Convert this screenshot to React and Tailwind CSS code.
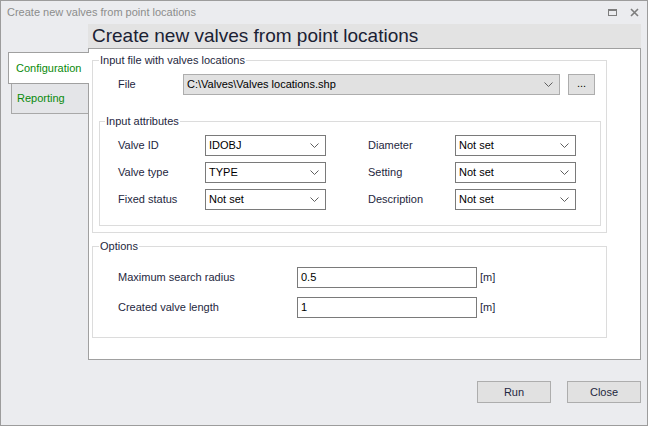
import React from "react";

function Chevron() {
  return (
    <svg width="9" height="5" viewBox="0 0 9 5" className="shrink-0">
      <path d="M0.5 0.5 L4.5 4.5 L8.5 0.5" stroke="#5f5f5f" strokeWidth="1" fill="none" />
    </svg>
  );
}

function Combo({ value, gray, w }) {
  return (
    <div
      className={
        "h-[21px] flex items-center justify-between pl-[3px] pr-[6px] border text-black " +
        (gray ? "bg-[#e1e1e1] border-[#adadad] " : "bg-white border-[#7a7a7a] ") +
        w
      }
    >
      <span>{value}</span>
      <Chevron />
    </div>
  );
}

function AttrRow({ l1, v1, l2, v2 }) {
  return (
    <div className="flex items-center h-[21px] ml-[18px]">
      <span className="w-[87px]">{l1}</span>
      <Combo value={v1} w="w-[121px]" />
      <span className="w-[87px] ml-[42px]">{l2}</span>
      <Combo value={v2} w="w-[121px]" />
    </div>
  );
}

function OptRow({ label, value }) {
  return (
    <div className="flex items-center h-[21px] ml-[25px]">
      <span className="w-[179px]">{label}</span>
      <div className="w-[180px] h-[21px] border border-[#7a7a7a] bg-white flex items-center pl-[3px] text-black">
        {value}
      </div>
      <span className="ml-[3px]">[m]</span>
    </div>
  );
}

export default function App() {
  return (
    <div className="w-[648px] h-[426px] bg-[#ebecef] border border-[#9c9c9c] flex flex-col font-['Liberation_Sans',sans-serif] text-[11px] text-[#1e2740] overflow-hidden">
      {/* title bar */}
      <div className="h-[22px] shrink-0 flex items-center pl-[6px] pr-[8px]">
        <span className="flex-1 text-[11px] text-[#8c8c8c]">Create new valves from point locations</span>
        <div className="w-[9px] h-[7px] border border-t-2 border-[#7d7d7d] mr-[13px]" />
        <svg width="9" height="9" viewBox="0 0 9 9">
          <path d="M1 1 L8 8 M8 1 L1 8" stroke="#7d7d7d" strokeWidth="1.6" />
        </svg>
      </div>

      <div className="flex flex-1">
        {/* tabs */}
        <div className="w-[80px] ml-[7px] pt-[29px] flex flex-col shrink-0">
          <div className="h-[32px] -mr-[1px] relative z-10 bg-white border border-r-0 border-[#a0a0a0] flex items-center pl-[7px] text-[#0a8a0a]">
            Configuration
          </div>
          <div className="h-[30px] ml-[3px] bg-[#e4e5e8] border border-t-0 border-r-0 border-[#a8a8a8] flex items-center pl-[5px] text-[#0a8a0a]">
            Reporting
          </div>
        </div>

        {/* main */}
        <div className="w-[553px] flex flex-col pt-[1px] shrink-0">
          <div className="h-[24px] bg-[#e3e3e3] pl-[4px] flex items-center text-[19px] text-[#1a2133]">
            Create new valves from point locations
          </div>
          <div className="h-[312px] bg-white border border-[#a0a0a0] pl-[3px] pt-[4px] flex flex-col">
            <fieldset className="w-[515px] h-[180px] border border-[#dcdcdc] flex flex-col">
              <legend className="ml-[6px] px-[1px] leading-[14px]">Input file with valves locations</legend>
              <div className="flex items-center mt-[7px] ml-[25px]">
                <span className="w-[65px]">File</span>
                <Combo value="C:\Valves\Valves locations.shp" gray w="w-[377px]" />
                <div className="ml-[8px] w-[27px] h-[21px] -mt-[1px] bg-[#e1e1e1] border border-[#adadad] flex items-center justify-center text-black pb-[2px]">
                  ...
                </div>
              </div>
              <fieldset className="ml-[6px] mt-[19px] w-[502px] h-[112px] border border-[#dcdcdc] flex flex-col gap-[6px] pt-[7px]">
                <legend className="ml-[5px] px-[1px] leading-[14px]">Input attributes</legend>
                <AttrRow l1="Valve ID" v1="IDOBJ" l2="Diameter" v2="Not set" />
                <AttrRow l1="Valve type" v1="TYPE" l2="Setting" v2="Not set" />
                <AttrRow l1="Fixed status" v1="Not set" l2="Description" v2="Not set" />
              </fieldset>
            </fieldset>
            <fieldset className="w-[515px] h-[99px] mt-[6px] border border-[#dcdcdc] flex flex-col gap-[9px] pt-[14px]">
              <legend className="ml-[6px] px-[1px] leading-[14px]">Options</legend>
              <OptRow label="Maximum search radius" value="0.5" />
              <OptRow label="Created valve length" value="1" />
            </fieldset>
          </div>
          <div className="flex justify-end mt-[21px]">
            <button className="w-[74px] h-[22px] bg-[#e1e1e1] border border-[#adadad] text-[#1e2740]">Run</button>
            <button className="w-[74px] h-[22px] ml-[16px] bg-[#e1e1e1] border border-[#adadad] text-[#1e2740]">Close</button>
          </div>
        </div>
      </div>
    </div>
  );
}
